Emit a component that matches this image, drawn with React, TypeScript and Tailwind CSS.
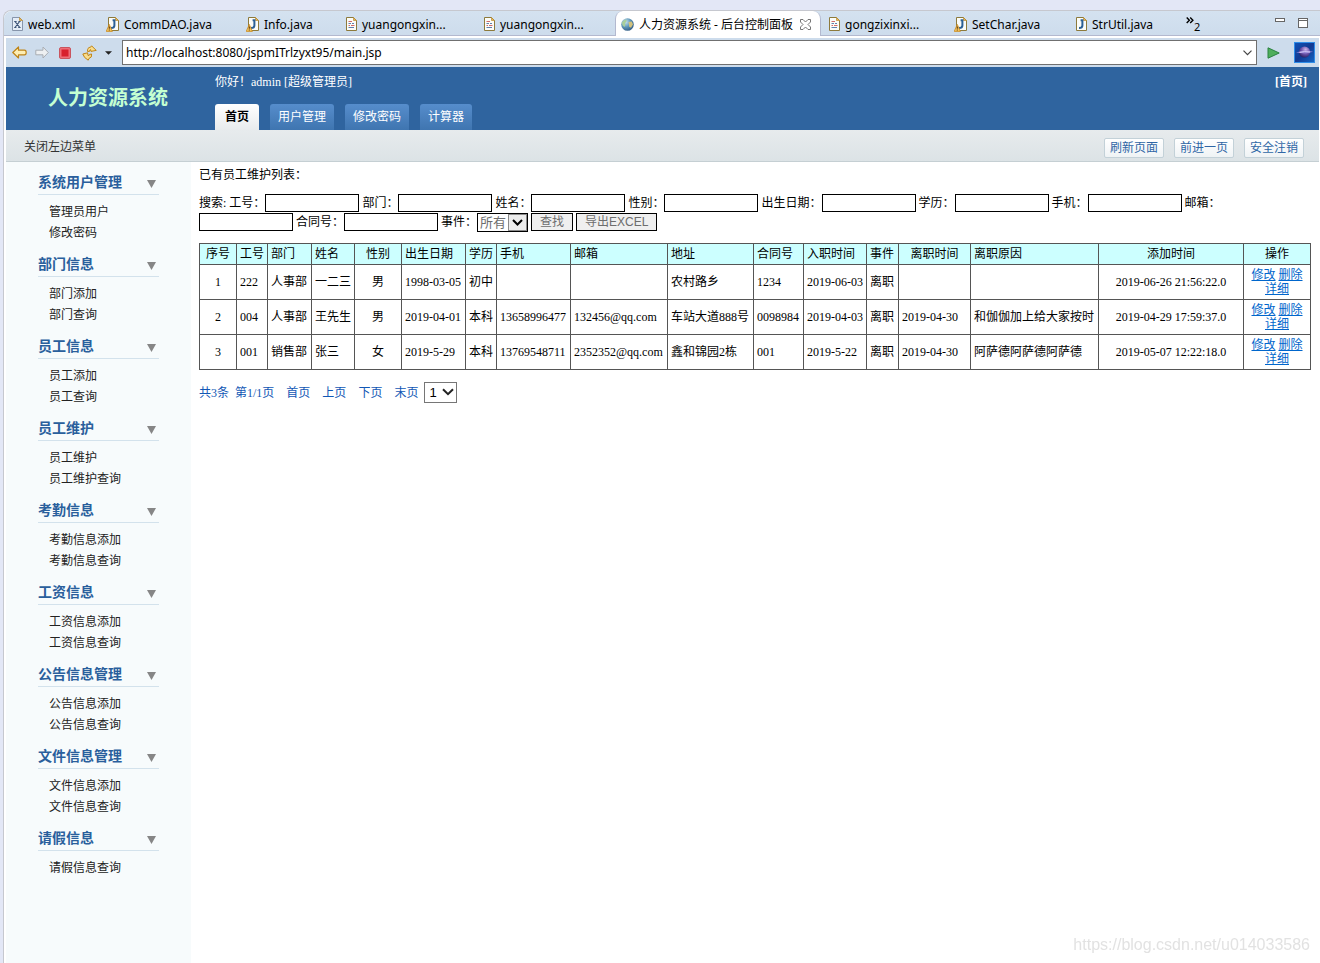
import type { ReactNode } from 'react'

type FileKind = 'xml' | 'java-warn' | 'java' | 'jsp'

const leftTabs: { name: string; kind: FileKind; width: string }[] = [
  { name: 'web.xml', kind: 'xml', width: 'w-[94px]' },
  { name: 'CommDAO.java', kind: 'java-warn', width: 'w-[140px]' },
  { name: 'Info.java', kind: 'java-warn', width: 'w-[100px]' },
  { name: 'yuangongxin...', kind: 'jsp', width: 'w-[138px]' },
  { name: 'yuangongxin...', kind: 'jsp', width: 'w-[139px]' },
]

const rightTabs: { name: string; kind: FileKind; width: string }[] = [
  { name: 'gongzixinxi...', kind: 'jsp', width: 'w-[125px]' },
  { name: 'SetChar.java', kind: 'java-warn', width: 'w-[122px]' },
  { name: 'StrUtil.java', kind: 'java', width: 'w-[110px]' },
]

const menu = [
  { title: '系统用户管理', items: ['管理员用户', '修改密码'] },
  { title: '部门信息', items: ['部门添加', '部门查询'] },
  { title: '员工信息', items: ['员工添加', '员工查询'] },
  { title: '员工维护', items: ['员工维护', '员工维护查询'] },
  { title: '考勤信息', items: ['考勤信息添加', '考勤信息查询'] },
  { title: '工资信息', items: ['工资信息添加', '工资信息查询'] },
  { title: '公告信息管理', items: ['公告信息添加', '公告信息查询'] },
  { title: '文件信息管理', items: ['文件信息添加', '文件信息查询'] },
  { title: '请假信息', items: ['请假信息查询'] },
]

const searchFields = ['工号', '部门', '姓名', '性别', '出生日期', '学历', '手机', '邮箱', '合同号']

const columns: { label: string; width: string; head?: string; cell?: string }[] = [
  { label: '序号', width: 'w-[37px]', head: 'text-center', cell: 'text-center' },
  { label: '工号', width: 'w-[31px]' },
  { label: '部门', width: 'w-[44px]' },
  { label: '姓名', width: 'w-[43px]' },
  { label: '性别', width: 'w-[47px]', head: 'text-center', cell: 'text-center' },
  { label: '出生日期', width: 'w-[64px]' },
  { label: '学历', width: 'w-[31px]' },
  { label: '手机', width: 'w-[74px]' },
  { label: '邮箱', width: 'w-[97px]' },
  { label: '地址', width: 'w-[86px]' },
  { label: '合同号', width: 'w-[50px]' },
  { label: '入职时间', width: 'w-[63px]' },
  { label: '事件', width: 'w-[32px]' },
  { label: '离职时间', width: 'w-[72px]', head: 'text-center' },
  { label: '离职原因', width: 'w-[128px]' },
  { label: '添加时间', width: 'w-[145px]', head: 'text-center', cell: 'text-center' },
]

const rows = [
  ['1', '222', '人事部', '一二三', '男', '1998-03-05', '初中', '', '', '农村路乡', '1234', '2019-06-03', '离职', '', '', '2019-06-26 21:56:22.0'],
  ['2', '004', '人事部', '王先生', '男', '2019-04-01', '本科', '13658996477', '132456@qq.com', '车站大道888号', '0098984', '2019-04-03', '离职', '2019-04-30', '和伽伽加上给大家按时', '2019-04-29 17:59:37.0'],
  ['3', '001', '销售部', '张三', '女', '2019-5-29', '本科', '13769548711', '2352352@qq.com', '鑫和锦园2栋', '001', '2019-5-22', '离职', '2019-04-30', '阿萨德阿萨德阿萨德', '2019-05-07 12:22:18.0'],
]

function FileIcon({ kind }: { kind: FileKind }) {
  const warn = kind === 'java-warn'
  const java = warn || kind === 'java'
  return (
    <svg width={warn ? 13 : 11} height="15" viewBox={warn ? '-2 0 13 15' : '0 0 11 15'} className="shrink-0" aria-hidden="true">
      <path
        d="M.5 .5H7.5L10.5 3.5V13.5H.5Z"
        fill={kind === 'xml' ? '#e4edf7' : '#fbfcf8'}
        stroke={kind === 'xml' ? '#8795ab' : '#8d7a3c'}
      />
      <path d="M7.5 .5V3.5H10.5Z" fill="#e6b85c" stroke="#b98b32" strokeWidth=".7" />
      {kind === 'xml' && <path d="M3 4.5 7.8 10.5M7.6 4.5 3 10.5M2.2 4.5H4.6M6.4 4.5H8.6M2.2 10.5H4.4M6.2 10.5H8.6" stroke="#3d5578" strokeWidth="1.2" />}
      {kind === 'jsp' && (
        <>
          <path d="M2.5 4.5H6" stroke="#d06a6a" />
          <path d="M2.5 6.5H5M6 6.5H8" stroke="#5f7fae" />
          <path d="M2.5 8.5H4M5 8.5H8.5" stroke="#d06a6a" />
          <path d="M2.5 10.5H8" stroke="#5f7fae" />
        </>
      )}
      {java && <path d="M4.6 3.2H6.4V8.4Q6.4 10.9 3 10.9" fill="none" stroke="#2b6096" strokeWidth="2" />}
      {warn && (
        <>
          <path d="M1.3 7.4 4.4 14.4H-1.8Z" fill="#f6c560" stroke="#c98a1f" strokeWidth=".8" strokeLinejoin="round" />
          <path d="M1.3 9.4V11.8M1.3 12.6V13.6" stroke="#5b3a08" strokeWidth="1.1" />
        </>
      )}
    </svg>
  )
}

function FileTab({ name, kind, width }: { name: string; kind: FileKind; width: string }) {
  return (
    <button className={`flex shrink-0 items-center gap-[5px] border-b border-[#b3b9cf] pl-2 pt-[3px] ${width}`}>
      <FileIcon kind={kind} />
      <span className="whitespace-nowrap">{name}</span>
    </button>
  )
}

function GlobeIcon() {
  return (
    <svg width="13" height="13" viewBox="0 0 13 13" className="shrink-0" aria-hidden="true">
      <defs>
        <radialGradient id="globe" cx=".35" cy=".3" r=".8">
          <stop offset="0" stopColor="#c7e4f2" />
          <stop offset=".5" stopColor="#5f97b8" />
          <stop offset="1" stopColor="#2b527c" />
        </radialGradient>
      </defs>
      <circle cx="6.5" cy="6.5" r="6.3" fill="url(#globe)" />
      <path d="M1 4.5Q2.4 1.6 5 1.4L5.8 3 4 5.4 4.4 7.4 3.2 9Q.9 7.4 1 4.5Z" fill="#a9cf9a" />
      <path d="M7.5 4 10.6 3.4 12 6.2 10 9.8 8.2 8.8 8 6.6Z" fill="#d3c27c" />
    </svg>
  )
}

function ToolButton({ label, width, children }: { label: string; width: string; children: ReactNode }) {
  return (
    <button aria-label={label} className={`flex shrink-0 items-center justify-center ${width}`}>
      {children}
    </button>
  )
}

function Toolbar() {
  return (
    <div className="flex h-[29px] items-center bg-[#cddcec] pl-[5px] pr-1">
      <ToolButton label="后退" width="w-4">
        <svg width="15" height="13" viewBox="0 0 15 13">
          <path d="M.8 6.5 6.5 1V4.2H12.5Q14.2 4.2 14.2 6.5T12.5 8.8H6.5V12Z" fill="#fdeeb4" stroke="#bf8417" strokeWidth="1.2" strokeLinejoin="round" />
        </svg>
      </ToolButton>
      <ToolButton label="前进" width="w-[30px]">
        <svg width="14" height="13" viewBox="0 0 14 13">
          <path d="M13.3 6.5 8 1V4.2H.8V8.8H8V12Z" fill="#eef0f2" stroke="#a9adb3" strokeLinejoin="round" />
        </svg>
      </ToolButton>
      <ToolButton label="停止" width="w-4">
        <svg width="12" height="12" viewBox="0 0 12 12">
          <rect x=".5" y=".5" width="11" height="11" rx="1.5" fill="#ee6f78" stroke="#c9545e" />
          <rect x="2.5" y="2.5" width="7" height="7" fill="#d8202c" />
        </svg>
      </ToolButton>
      <ToolButton label="刷新" width="w-8">
        <svg width="15" height="16" viewBox="0 0 15 16">
          <path d="M5.6 6.6Q5 2.4 8.6 2.2L9.6 .8 14.2 5.4 9 6.4 8.6 4.6Q7.4 4.8 7.8 6.2Z" fill="#f9dc8b" stroke="#bf8417" strokeLinejoin="round" />
          <path d="M9.6 9Q10.2 12.8 7 13.4L6.2 15.2 2.6 12.4 .8 9 5.6 7.8 6 10.4Q7.6 10.8 7.6 9.4Z" fill="#f9dc8b" stroke="#bf8417" strokeLinejoin="round" />
        </svg>
      </ToolButton>
      <ToolButton label="更多" width="w-[7px]">
        <svg width="8" height="4" viewBox="0 0 8 4">
          <path d="M0 0H8L4 4Z" fill="#222" />
        </svg>
      </ToolButton>
      <div className="ml-2.5 flex h-[25px] flex-1 items-center border border-[#707070] bg-white">
        <input
          aria-label="地址"
          defaultValue="http://localhost:8080/jspmITrlzyxt95/main.jsp"
          className="min-w-0 flex-1 bg-transparent pl-[3px] text-black outline-none"
        />
        <button aria-label="历史" className="px-1">
          <svg width="9" height="6" viewBox="0 0 9 6">
            <path d="M.5 .7 4.5 4.7 8.5 .7" fill="none" stroke="#444" strokeWidth="1.2" />
          </svg>
        </button>
      </div>
      <ToolButton label="转到" width="w-8">
        <svg width="13" height="12" viewBox="0 0 13 12">
          <path d="M1 .8 12.2 6 1 11.2Z" fill="#4fae5c" stroke="#2a8240" strokeLinejoin="round" />
        </svg>
      </ToolButton>
      <svg width="21" height="21" viewBox="0 0 21 21" className="ml-[5px] shrink-0" aria-hidden="true">
        <defs>
          <linearGradient id="space" x1="0" y1="0" x2="1" y2="1">
            <stop offset="0" stopColor="#1153b8" />
            <stop offset=".5" stopColor="#123a92" />
            <stop offset="1" stopColor="#1467c4" />
          </linearGradient>
          <radialGradient id="planet" cx=".6" cy=".3" r=".8">
            <stop offset="0" stopColor="#cdb7ec" />
            <stop offset=".5" stopColor="#6a51a8" />
            <stop offset="1" stopColor="#1e1452" />
          </radialGradient>
        </defs>
        <rect x=".5" y=".5" width="20" height="20" fill="url(#space)" stroke="#2f8de8" />
        <circle cx="10.5" cy="10" r="5.6" fill="url(#planet)" />
        <path d="M2 10.5Q10.5 7.6 19 9.8 10.5 12.4 2 10.5Z" fill="#8f7fd2" />
        <path d="M5.5 10.4Q10.5 9 16 10" fill="none" stroke="#e9dcff" strokeWidth=".8" />
      </svg>
    </div>
  )
}

function TabStrip() {
  return (
    <div className="flex h-[25px] overflow-hidden rounded-tl-lg bg-linear-to-b from-[#d4e2f0] to-[#cddcec]">
      {leftTabs.map((tab, i) => (
        <FileTab key={i} {...tab} />
      ))}
      <div className="flex w-[206px] shrink-0 items-center gap-[5px] rounded-t-lg border-x border-[#b3b9cf] bg-white pl-[5px] pt-0.5">
        <GlobeIcon />
        <span className="whitespace-nowrap">人力资源系统 - 后台控制面板</span>
        <button aria-label="关闭" className="ml-0.5">
          <svg width="11" height="11" viewBox="0 0 11 11">
            <path d="M.5 .5H3L5.5 3 8 .5H10.5V3L8 5.5 10.5 8V10.5H8L5.5 8 3 10.5H.5V8L3 5.5 .5 3Z" fill="#fff" stroke="#666" strokeWidth=".9" />
          </svg>
        </button>
      </div>
      {rightTabs.map((tab) => (
        <FileTab key={tab.name} {...tab} />
      ))}
      <div className="flex flex-1 justify-between border-b border-[#b3b9cf] pl-2 pr-3">
        <button aria-label="更多标签" className="flex items-start pt-1">
          <svg width="8" height="7" viewBox="0 0 8 7" className="mt-0.5">
            <path d="M.7 .5 3.4 3.2 .7 6M4.2 .5 6.9 3.2 4.2 6" fill="none" stroke="#000" strokeWidth="1.4" />
          </svg>
          <span className="mt-1.5 text-[11px] leading-3">2</span>
        </button>
        <div className="flex gap-[13px] pt-[7px]">
          <button aria-label="最小化" className="flex items-start">
            <svg width="10" height="4" viewBox="0 0 10 4">
              <rect x=".5" y=".5" width="9" height="3" fill="#fff" stroke="#666" />
            </svg>
          </button>
          <button aria-label="最大化" className="flex items-start">
            <svg width="10" height="10" viewBox="0 0 10 10">
              <rect x=".5" y=".5" width="9" height="9" fill="#fff" stroke="#666" />
              <path d="M0 2.5H10" stroke="#666" />
            </svg>
          </button>
        </div>
      </div>
    </div>
  )
}

function Header() {
  return (
    <header className="flex h-[63px] bg-[#2f649f] text-white">
      <h1 className="w-[209px] shrink-0 pl-[42px] pt-4 text-xl leading-[30px] font-bold text-[#c4ffd2]">人力资源系统</h1>
      <div className="flex flex-1 flex-col justify-between">
        <div className="flex justify-between pr-3 pt-1.5 leading-[18px]">
          <p>你好！admin [超级管理员]</p>
          <a href="#" className="font-bold">[首页]</a>
        </div>
        <nav className="flex gap-[11px] leading-[26px]">
          <a href="#" className="rounded-t-[3px] bg-linear-to-b from-white to-[#e8ebed] px-2.5 font-bold text-black">首页</a>
          {['用户管理', '修改密码', '计算器'].map((name) => (
            <a key={name} href="#" className="rounded-t-[3px] bg-linear-to-b from-[#568dcc] to-[#3f75b0] px-2">{name}</a>
          ))}
        </nav>
      </div>
    </header>
  )
}

function Sidebar() {
  return (
    <aside className="w-[185px] shrink-0 bg-[#f7fbfc] pl-8">
      {menu.map((group) => (
        <section key={group.title} className="w-[121px] pt-[11px]">
          <h2 className="flex items-center justify-between border-b border-[#d3e2ec] pb-px pr-[3px] text-sm leading-5 font-bold text-[#2a5f9c]">
            {group.title}
            <svg width="9" height="8" viewBox="0 0 9 8" className="mt-0.5" aria-hidden="true">
              <path d="M0 0H9L4.5 8Z" fill="#868686" />
            </svg>
          </h2>
          <ul className="pl-[11px] pt-[7px] leading-[21px] text-[#222]">
            {group.items.map((item) => (
              <li key={item}>
                <a href="#">{item}</a>
              </li>
            ))}
          </ul>
        </section>
      ))}
    </aside>
  )
}

function SearchForm() {
  return (
    <form className="mt-2.5 leading-[19px]" onSubmit={(e) => e.preventDefault()}>
      搜索:{' '}
      {searchFields.map((field) => (
        <span key={field}>
          <label htmlFor={`f-${field}`}>{field}：</label>
          <input id={`f-${field}`} className="h-[18px] w-[94px] border border-black bg-white px-px align-top" />{' '}
        </span>
      ))}
      <label htmlFor="f-event">事件：</label>
      <span className="relative inline-block align-top">
        <select
          id="f-event"
          className="block h-[19px] w-[51px] appearance-none border border-black bg-white pl-0.5 font-['Liberation_Sans','Noto_Sans_CJK_SC',sans-serif] text-[13px] leading-4 text-[#6d6d6d]"
        >
          <option>所有</option>
        </select>
        <span className="pointer-events-none absolute inset-y-px right-px flex w-[19px] items-center justify-center border border-[#8a8a8a] bg-[#ececec]">
          <svg width="11" height="7" viewBox="0 0 11 7">
            <path d="M1 1 5.5 5.5 10 1" fill="none" stroke="#000" strokeWidth="2" />
          </svg>
        </span>
      </span>{' '}
      <button className="h-[18px] border border-black bg-[#efefef] px-2 align-top font-['Liberation_Sans','Noto_Sans_CJK_SC',sans-serif] text-xs leading-4 text-[#6d6d6d]">查找</button>{' '}
      <button className="h-[18px] border border-black bg-[#efefef] px-2 align-top font-['Liberation_Sans','Noto_Sans_CJK_SC',sans-serif] text-xs leading-4 text-[#6d6d6d]">导出EXCEL</button>
    </form>
  )
}

function StaffTable() {
  return (
    <table className="mt-[11px] w-full table-fixed border-collapse whitespace-nowrap leading-[14px]">
      <thead>
        <tr className="h-[21px] bg-[#ccffff]">
          {columns.map((col) => (
            <th key={col.label} className={`border border-[#555] px-[3px] font-normal ${col.width} ${col.head ?? 'text-left'}`}>{col.label}</th>
          ))}
          <th className="w-[67px] border border-[#555] px-[3px] text-center font-normal">操作</th>
        </tr>
      </thead>
      <tbody>
        {rows.map((row) => (
          <tr key={row[0]}>
            {row.map((value, i) => (
              <td key={i} className={`border border-[#555] px-[3px] py-[3px] ${columns[i].cell ?? ''}`}>{value}</td>
            ))}
            <td className="border border-[#555] px-[3px] py-[3px] text-center whitespace-normal text-[#0066cc] underline-offset-1">
              <a href="#" className="underline">修改</a> <a href="#" className="underline">删除</a>{' '}
              <a href="#" className="underline">详细</a>
            </td>
          </tr>
        ))}
      </tbody>
    </table>
  )
}

function Pager() {
  return (
    <div className="mt-3 flex items-center gap-3 text-[#1157b5]">
      <p>共3条&nbsp; 第1/1页</p>
      <a href="#">首页</a>
      <a href="#">上页</a>
      <a href="#">下页</a>
      <div className="flex items-center gap-1.5">
        <a href="#">末页</a>
        <span className="relative">
          <select
            aria-label="页码"
            className="block h-[21px] w-[33px] appearance-none border border-[#767676] bg-white pl-1 font-['Liberation_Sans',sans-serif] text-[13px] leading-4 text-black"
          >
            <option>1</option>
          </select>
          <svg width="12" height="8" viewBox="0 0 12 8" className="pointer-events-none absolute right-[3px] top-[6px]">
            <path d="M1 1.2 6 6.2 11 1.2" fill="none" stroke="#222" strokeWidth="2" />
          </svg>
        </span>
      </div>
    </div>
  )
}

export default function App() {
  return (
    <div className="flex min-h-screen flex-col bg-[#e3e7f6] pl-[3px] pt-[10px] font-['Liberation_Serif','Noto_Sans_CJK_SC',serif] text-xs text-black">
      <div className="flex flex-1 flex-col rounded-tl-lg border-l border-t border-[#c6c8cf] bg-white">
        <div className="font-['Noto_Sans','Noto_Sans_CJK_SC',sans-serif]">
          <TabStrip />
          <div className="pl-0.5 pr-px pt-0.5">
            <Toolbar />
          </div>
        </div>
        <div className="flex flex-1 flex-col pl-0.5 pr-px">
          <Header />
          <div className="flex h-8 items-center justify-between border-b border-[#c5cfd3] bg-linear-to-b from-[#e7ebed] to-[#dce3e6] pl-[18px] pr-[15px]">
            <button className="pt-0.5 text-[#333]">关闭左边菜单</button>
            <div className="flex gap-2.5 pt-1">
              {['刷新页面', '前进一页', '安全注销'].map((name) => (
                <button key={name} className="h-5 rounded-xs border border-[#c3d1d8] bg-linear-to-b from-white to-[#eff3f5] px-[5px] leading-[18px] text-[#2f66a5]">{name}</button>
              ))}
            </div>
          </div>
          <div className="flex flex-1">
            <Sidebar />
            <main className="min-w-0 flex-1 px-2 pt-1">
              <p className="leading-[18px]">已有员工维护列表：</p>
              <SearchForm />
              <StaffTable />
              <Pager />
            </main>
          </div>
        </div>
      </div>
      <p className="pointer-events-none fixed bottom-2 right-2.5 font-['Liberation_Sans',sans-serif] text-base leading-5 text-[#e2e2e2]">https://blog.csdn.net/u014033586</p>
    </div>
  )
}
